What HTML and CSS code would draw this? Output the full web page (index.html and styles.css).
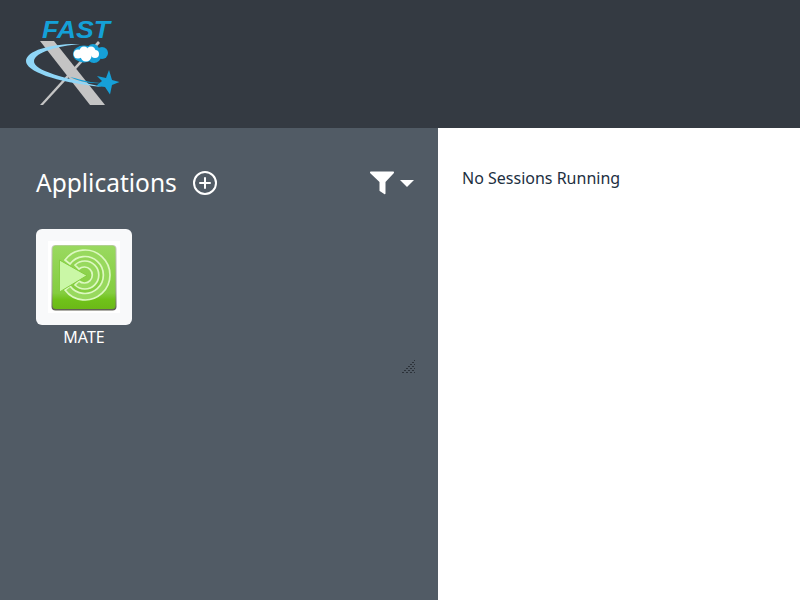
FILE: index.html
```html
<!DOCTYPE html>
<html lang="en">

<head>
    <meta charset="UTF-8">
    <meta name="viewport" content="width=device-width, initial-scale=1.0">
    <title>FastX</title>
    <link rel="stylesheet" href="styles.css">
</head>

<body>
    <header class="topbar">
        <svg class="logo" width="96" height="108" viewBox="0 0 96 108">
            <defs>
                <filter id="soft"><feGaussianBlur stdDeviation="0.3"/></filter>
            </defs>
            <g filter="url(#soft)">
                <!-- X -->
                <polygon points="16,41 30,41 81,105 66,105" fill="#c4c4c4"/>
                <polygon points="74,41 76,43 19,105 16,105" fill="#c4c4c4"/>
                <!-- swoosh -->
                <path d="M56,44 C30,43 2,50 2,61 C2,71 30,82 78,87 C42,78 9,71 10,61 C11,52 34,46 56,44 Z" fill="#8fd6f7"/>
                <path d="M46,77 C58,80 68,83 78,83 C66,84 54,81 46,77 Z" fill="#14a0d8"/>
                <!-- star -->
                <polygon points="85,70 88,80 95.500,82 88,85 86,94.500 81,87 72,86 78,81 73,76 82,78" fill="#14a0d8"/>
                <!-- cloud -->
                <g fill="#14a0d8">
                    <ellipse cx="60" cy="54" rx="11" ry="8.500"/>
                    <circle cx="69" cy="50.500" r="6.500"/>
                    <circle cx="78" cy="53" r="6"/>
                    <circle cx="70" cy="56" r="7"/>
                </g>
                <g fill="#fff">
                    <circle cx="54" cy="54" r="4.500"/>
                    <circle cx="60" cy="51" r="4.500"/>
                    <circle cx="67" cy="51" r="4.500"/>
                    <circle cx="62" cy="56" r="5.500"/>
                    <circle cx="71" cy="54" r="4"/>
                </g>
            </g>
            <text class="logo-text" x="18" y="38" textLength="68" lengthAdjust="spacingAndGlyphs">FAST</text>
        </svg>
    </header>

    <main class="content">
        <section class="sidebar">
            <div class="sidebar-head">
                <h1 class="title">Applications</h1>
                <svg class="add-icon" width="26" height="26" viewBox="0 0 26 26">
                    <circle cx="13" cy="13" r="11" fill="none" stroke="#fff" stroke-width="2"/>
                    <path d="M13 8v10M8 13h10" fill="none" stroke="#fff" stroke-width="2" stroke-linecap="round"/>
                </svg>
                <div class="filter">
                    <svg width="26" height="24" viewBox="0 0 26 24">
                        <path d="M1 1.500C1 .8 1.500.5 2 .5h22c.6 0 1 .4 1 1 0 .3-.1.5-.3.7L16.500 11v11.500c0 .7-.8 1-1.300.6l-4.500-3c-.2-.2-.2-.4-.2-.6V11L1.300 2.200C1.100 2 1 1.800 1 1.500z" fill="#fff"/>
                    </svg>
                    <span class="caret"></span>
                </div>
            </div>

            <div class="apps">
                <div class="app">
                    <div class="app-tile">
                        <svg width="72" height="72" viewBox="0 0 72 72">
                            <defs>
                                <linearGradient id="mate" x1="0" y1="0" x2="0" y2="1">
                                    <stop offset="0" stop-color="#9ad960"/>
                                    <stop offset="0.75" stop-color="#84cd3f"/>
                                    <stop offset="0.85" stop-color="#70c21a"/>
                                    <stop offset="1" stop-color="#6bb917"/>
                                </linearGradient>
                                <linearGradient id="rim" x1="0" y1="0" x2="0" y2="1">
                                    <stop offset="0" stop-color="#c8c8c0"/>
                                    <stop offset="0.7" stop-color="#a0a098"/>
                                    <stop offset="1" stop-color="#5e5e52"/>
                                </linearGradient>
                            </defs>
                            <rect x="0" y="0" width="72" height="72" fill="#fff"/>
                            <rect x="3.500" y="4" width="65" height="65.500" rx="4" fill="url(#rim)"/>
                            <rect x="4.500" y="4.500" width="63" height="63.500" rx="3.500" fill="url(#mate)"/>
                            <g fill="#98d95e" stroke="#dcf8c0" stroke-width="1.700">
                                <path d="M17,19 A25 25 0 1 1 17,49 L22,45 A18.500 18.500 0 1 0 22,23 Z"/>
                                <path d="M27,24 A14 14 0 1 1 27,44 L31,40 A8 8 0 1 0 31,28 Z"/>
                            </g>
                            <polygon points="11.500,19 39,34.500 11.500,51" fill="#caf7a6" stroke="#84cd3f" stroke-width="1"/>
                        </svg>
                    </div>
                    <span class="app-name">MATE</span>
                </div>
            </div>
        </section>

        <section class="sessions">
            <p>No Sessions Running</p>
        </section>
    </main>
</body>

</html>
```

FILE: styles.css
```css
* {
    margin: 0;
    padding: 0;
    box-sizing: border-box;
}

html,
body {
    height: 100%;
    overflow: hidden;
}

body {
    font-family: "Noto Sans", sans-serif;
    font-size: 16px;
    color: #212f3f;
    background: #fff;
    display: flex;
    flex-direction: column;
}

.topbar {
    height: 128px;
    background: #343a42;
    padding-left: 24px;
    flex-shrink: 0;
}

.logo {
    display: block;
}

.logo-text {
    font-family: "Liberation Sans", sans-serif;
    font-size: 23px;
    font-weight: bold;
    font-style: italic;
    fill: #14a0d8;
}

.content {
    flex: 1;
    display: flex;
    min-height: 0;
}

.sidebar {
    width: 438px;
    background: #515b65;
    padding: 36px 24px 0 36px;
    color: #fff;
}

.sidebar-head {
    display: flex;
    align-items: center;
    height: 38px;
}

.title {
    font-size: 24.5px;
    font-weight: 400;
    line-height: 38px;
}

.add-icon {
    margin-left: 15px;
}

.filter {
    margin-left: auto;
    display: flex;
    align-items: center;
    gap: 5px;
}

.filter svg {
    display: block;
}

.caret {
    width: 0;
    height: 0;
    border-left: 7px solid transparent;
    border-right: 7px solid transparent;
    border-top: 7px solid #fff;
}

.apps {
    width: 379px;
    height: 145px;
    margin-top: 27px;
    overflow: auto;
    resize: both;
}

/* dotted corner grip */
.apps::-webkit-resizer {
    background:
        linear-gradient(135deg, #515b65 50%, transparent 50%),
        repeating-linear-gradient(45deg, transparent 0 1.4px, #515b65 1.4px 2.8px),
        repeating-linear-gradient(135deg, #2b3138 0 1.4px, #515b65 1.4px 2.8px);
}

.app {
    width: 96px;
    text-align: center;
}

.app-tile {
    width: 96px;
    height: 96px;
    background: #f8f9fa;
    border-radius: 6px;
    display: flex;
    align-items: center;
    justify-content: center;
}

.app-tile svg {
    display: block;
}

.app-name {
    display: block;
    font-size: 16px;
    line-height: 24px;
}

.sessions {
    flex: 1;
    padding: 38px 24px 0;
}

.sessions p {
    line-height: 24px;
}
```
